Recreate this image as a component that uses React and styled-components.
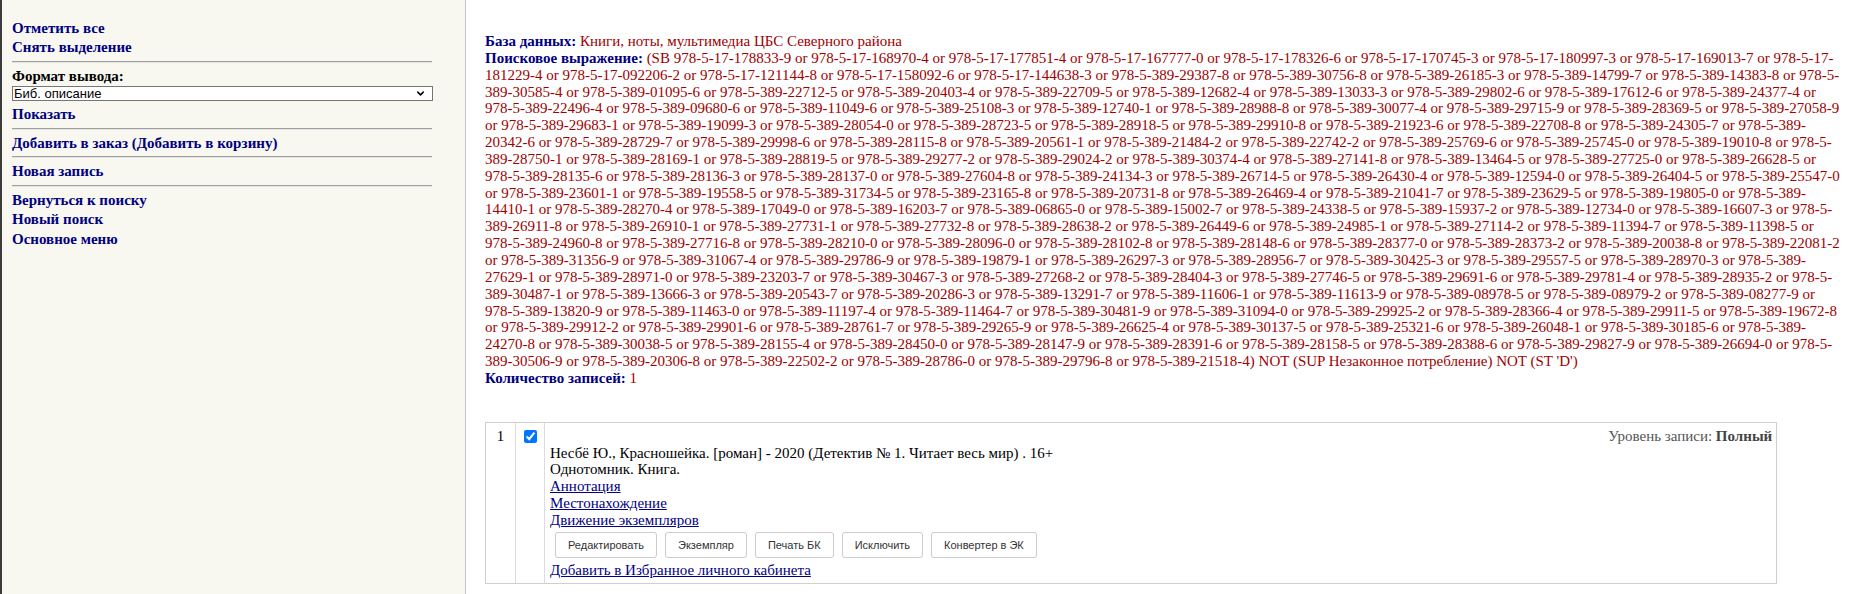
import styled, { createGlobalStyle } from "styled-components";
import { ChevronDown } from "lucide-react";

const isbn17 = [
    "178833-9", "168970-4", "177851-4", "167777-0", "178326-6", "170745-3", "180997-3",
    "169013-7", "181229-4", "092206-2", "121144-8", "158092-6", "144638-3",
];

const isbn389 = [
    "29387-8", "30756-8", "26185-3", "14799-7", "14383-8", "30585-4",
    "01095-6", "22712-5", "20403-4", "22709-5", "12682-4", "13033-3", "29802-6", "17612-6", "24377-4",
    "22496-4", "09680-6", "11049-6", "25108-3", "12740-1", "28988-8", "30077-4", "29715-9", "28369-5", "27058-9",
    "29683-1", "19099-3", "28054-0", "28723-5", "28918-5", "29910-8", "21923-6", "22708-8", "24305-7", "20342-6",
    "28729-7", "29998-6", "28115-8", "20561-1", "21484-2", "22742-2", "25769-6", "25745-0", "19010-8", "28750-1",
    "28169-1", "28819-5", "29277-2", "29024-2", "30374-4", "27141-8", "13464-5", "27725-0", "26628-5",
    "28135-6", "28136-3", "28137-0", "27604-8", "24134-3", "26714-5", "26430-4", "12594-0", "26404-5", "25547-0",
    "23601-1", "19558-5", "31734-5", "23165-8", "20731-8", "26469-4", "21041-7", "23629-5", "19805-0", "14410-1",
    "28270-4", "17049-0", "16203-7", "06865-0", "15002-7", "24338-5", "15937-2", "12734-0", "16607-3", "26911-8",
    "26910-1", "27731-1", "27732-8", "28638-2", "26449-6", "24985-1", "27114-2", "11394-7", "11398-5",
    "24960-8", "27716-8", "28210-0", "28096-0", "28102-8", "28148-6", "28377-0", "28373-2", "20038-8", "22081-2",
    "31356-9", "31067-4", "29786-9", "19879-1", "26297-3", "28956-7", "30425-3", "29557-5", "28970-3", "27629-1",
    "28971-0", "23203-7", "30467-3", "27268-2", "28404-3", "27746-5", "29691-6", "29781-4", "28935-2", "30487-1",
    "13666-3", "20543-7", "20286-3", "13291-7", "11606-1", "11613-9", "08978-5", "08979-2", "08277-9",
    "13820-9", "11463-0", "11197-4", "11464-7", "30481-9", "31094-0", "29925-2", "28366-4", "29911-5", "19672-8",
    "29912-2", "29901-6", "28761-7", "29265-9", "26625-4", "30137-5", "25321-6", "26048-1", "30185-6", "24270-8",
    "30038-5", "28155-4", "28450-0", "28147-9", "28391-6", "28158-5", "28388-6", "29827-9", "26694-0", "30506-9",
    "20306-8", "22502-2", "28786-0", "29796-8", "21518-4",
];

const query =
    "(SB " +
    [...isbn17.map(n => "978-5-17-" + n), ...isbn389.map(n => "978-5-389-" + n)].join(" or ") +
    ") NOT (SUP Незаконное потребление) NOT (ST 'D')";

const actions = ["Редактировать", "Экземпляр", "Печать БК", "Исключить", "Конвертер в ЭК"];

const App = () => {
    return (
        <>
            <GlobalStyle />
            <Page>
                <Sidebar>
                    <MenuLink href="#">Отметить все</MenuLink>
                    <MenuLink href="#">Снять выделение</MenuLink>
                    <Divider />
                    <FieldLabel>Формат вывода:</FieldLabel>
                    <SelectWrap>
                        <Select defaultValue="bib">
                            <option value="bib">Биб. описание</option>
                        </Select>
                        <Chevron size={11} strokeWidth={3.2} />
                    </SelectWrap>
                    <MenuLink href="#">Показать</MenuLink>
                    <Divider />
                    <MenuLink href="#">Добавить в заказ (Добавить в корзину)</MenuLink>
                    <Divider />
                    <MenuLink href="#">Новая запись</MenuLink>
                    <Divider />
                    <MenuLink href="#">Вернуться к поиску</MenuLink>
                    <MenuLink href="#">Новый поиск</MenuLink>
                    <MenuLink href="#">Основное меню</MenuLink>
                </Sidebar>

                <Main>
                    <InfoLine>
                        <Label>База данных:</Label> <Value>Книги, ноты, мультимедиа ЦБС Северного района</Value>
                    </InfoLine>
                    <InfoLine>
                        <Label>Поисковое выражение:</Label> <Value>{query}</Value>
                    </InfoLine>
                    <InfoLine>
                        <Label>Количество записей:</Label> <Value>1</Value>
                    </InfoLine>

                    <RecordCard>
                        <NumCell>1</NumCell>
                        <CheckCell>
                            <input type="checkbox" defaultChecked />
                        </CheckCell>
                        <BodyCell>
                            <Level>Уровень записи: <b>Полный</b></Level>
                            <div>Несбё Ю., Красношейка. [роман] - 2020 (Детектив № 1. Читает весь мир) . 16+</div>
                            <div>Однотомник. Книга.</div>
                            <RecordLink href="#">Аннотация</RecordLink>
                            <RecordLink href="#">Местонахождение</RecordLink>
                            <RecordLink href="#">Движение экземпляров</RecordLink>
                            <ButtonRow>
                                {actions.map(a => (
                                    <ActionButton key={a}>{a}</ActionButton>
                                ))}
                            </ButtonRow>
                            <RecordLink href="#">Добавить в Избранное личного кабинета</RecordLink>
                        </BodyCell>
                    </RecordCard>
                </Main>
            </Page>
        </>
    );
};

const GlobalStyle = createGlobalStyle`
    body {
        margin: 0;
        background: #fff;
        font-family: "Liberation Serif", "Times New Roman", serif;
    }
`;

const Page = styled.div`
    display: grid;
    grid-template-columns: 466px 1fr;
    min-height: 100vh;
`;

const Sidebar = styled.aside`
    box-sizing: border-box;
    background: #f8f8f0;
    border-left: 2px solid #3c3c3c;
    border-right: 1px solid #c4c4c4;
    padding: 18.5px 33px 0 10px;
`;

const MenuLink = styled.a`
    display: block;
    font: bold 15px/19.5px "Liberation Serif", serif;
    color: #000080;
    text-decoration: none;
`;

const Divider = styled.hr`
    margin: 3px 0 4px;
    border: 0;
    border-top: 1px solid #a0a0a0;
    border-bottom: 1px solid #e4e4e0;
`;

const FieldLabel = styled.div`
    font: bold 15px/19.5px "Liberation Serif", serif;
    color: #000;
`;

const SelectWrap = styled.div`
    position: relative;
    margin-bottom: 4px;
`;

const Select = styled.select`
    display: block;
    box-sizing: border-box;
    width: calc(100% + 1px);
    height: 15px;
    margin: 0;
    padding: 0 0 0 1px;
    appearance: none;
    border: 1px solid #767676;
    border-radius: 0;
    background: #fff;
    color: #000;
    font: 13px/13px "Liberation Sans", Arial, sans-serif;
`;

const Chevron = styled(ChevronDown)`
    position: absolute;
    right: 6px;
    top: 2px;
    color: #000;
    pointer-events: none;
`;

const Main = styled.main`
    padding: 33px 12px 20px 19px;
    font-size: 15px;
    line-height: 16.85px;
    color: #000;
`;

const InfoLine = styled.div``;

const Label = styled.b`
    color: #000080;
`;

const Value = styled.span`
    color: #a00000;
`;

const RecordCard = styled.div`
    display: grid;
    grid-template-columns: 30px 29px 1fr;
    width: calc(95% + 3px);
    margin-top: 35px;
    border: 1px solid #cfcfcf;
`;

const NumCell = styled.div`
    border-right: 1px solid #dcdcdc;
    padding-top: 5px;
    text-align: center;
`;

const CheckCell = styled.div`
    display: flex;
    justify-content: center;
    align-items: flex-start;
    border-right: 1px solid #dcdcdc;
    padding-top: 4px;

    input {
        width: 13px;
        height: 13px;
        margin: 3px 3px 3px 4px;
    }
`;

const BodyCell = styled.div`
    padding: 5px 4px 3.5px 5px;
`;

const Level = styled.div`
    text-align: right;
    color: #555;

    b {
        color: #444;
    }
`;

const RecordLink = styled.a`
    display: block;
    width: max-content;
    color: #000080;
    text-decoration: underline;
`;

const ButtonRow = styled.div`
    display: flex;
    gap: 8px;
    margin: 3px 0 4.5px;
    padding-left: 5px;
`;

const ActionButton = styled.button`
    height: 26px;
    padding: 0 12px;
    background: #fff;
    border: 1px solid #ccc;
    border-radius: 3px;
    color: #333;
    font: 11px "Liberation Sans", Arial, sans-serif;
    cursor: pointer;
`;

export default App;
